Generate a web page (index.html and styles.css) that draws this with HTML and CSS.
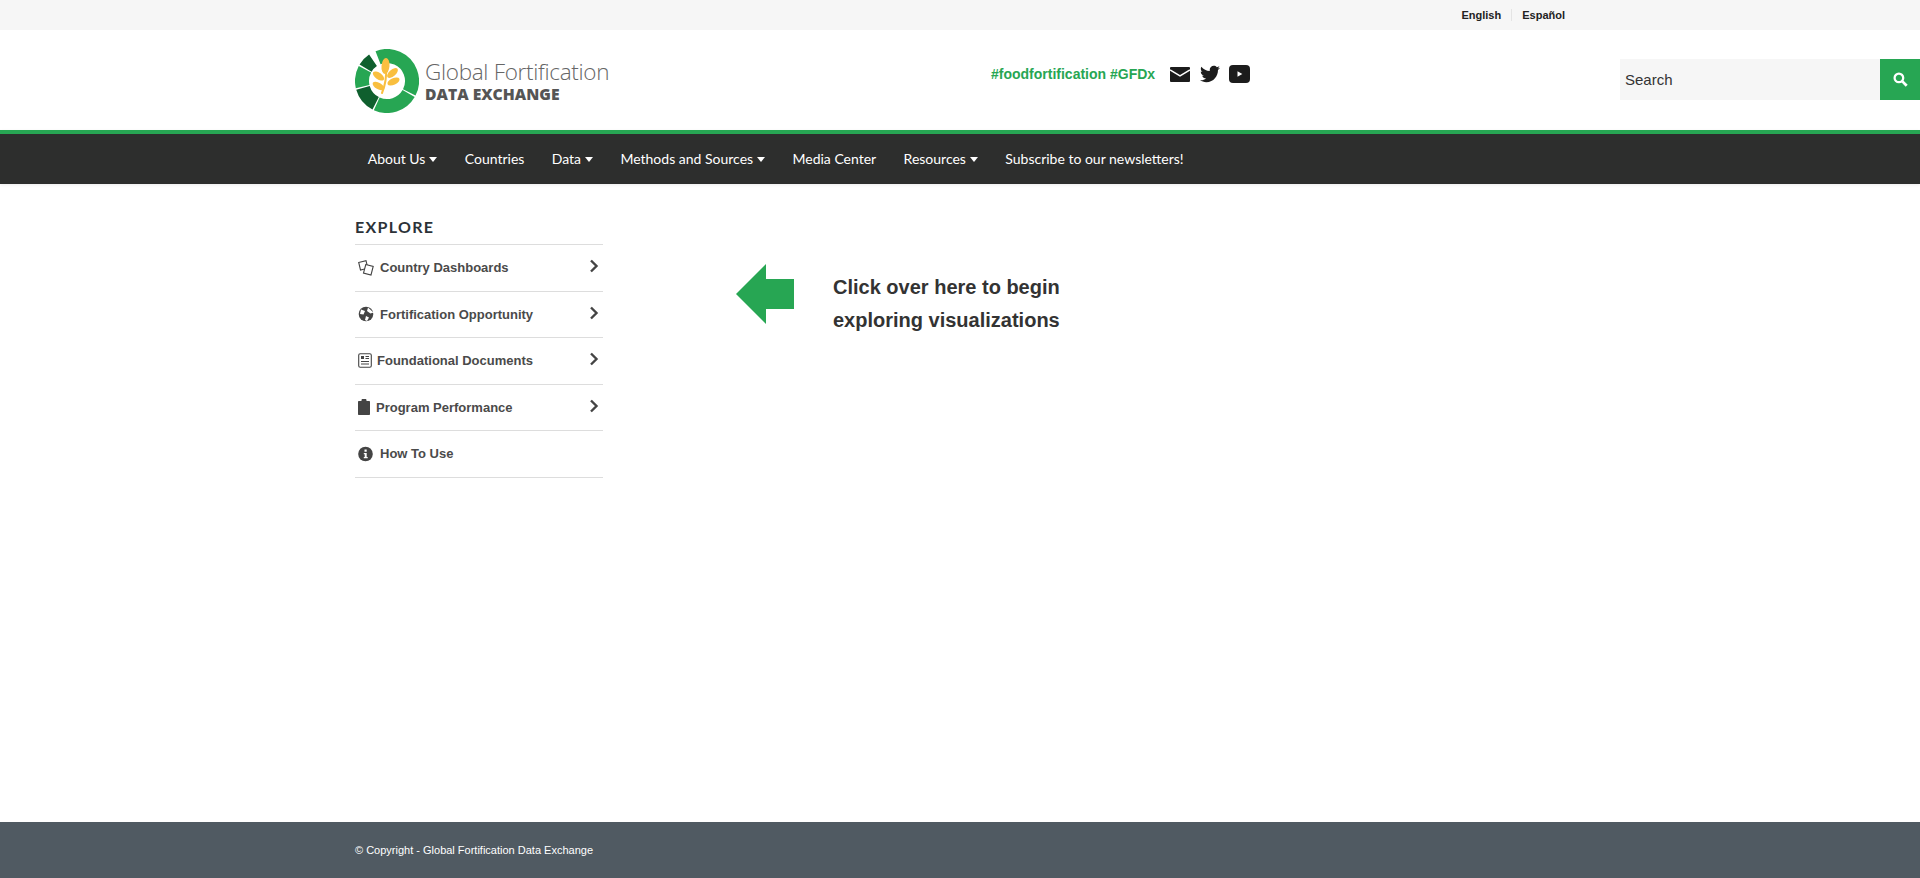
FILE: index.html
```html
<!DOCTYPE html>
<html lang="en">
<head>
<meta charset="utf-8">
<title>Global Fortification Data Exchange</title>
<link rel="stylesheet" href="styles.css">
</head>
<body>
<div class="topbar">
  <div class="langs"><a class="lang">English</a><span class="lang-sep"></span><a class="lang">Español</a></div>
</div>
<header class="header">
  <a class="logo">
    <svg class="logo-mark" viewBox="0 0 64 64" width="64" height="64">
      <circle class="seg seg-g" cx="32" cy="32" r="25" pathLength="360" stroke-dasharray="138 360" transform="rotate(-111 32 32)"/>
      <circle class="seg seg-g" cx="32" cy="32" r="25" pathLength="360" stroke-dasharray="84 360" transform="rotate(30 32 32)"/>
      <circle class="seg seg-d" cx="32" cy="32" r="25" pathLength="360" stroke-dasharray="47 360" transform="rotate(117 32 32)"/>
      <circle class="seg seg-g" cx="32" cy="32" r="25" pathLength="360" stroke-dasharray="41 360" transform="rotate(167 32 32)"/>
      <circle class="seg seg-d" cx="32" cy="32" r="25" pathLength="360" stroke-dasharray="25 360" transform="rotate(211 32 32)"/>
      <g class="wheat">
        <ellipse cx="30.500" cy="17" rx="4" ry="8" transform="rotate(5 30.500 17)"/>
        <ellipse cx="37.500" cy="24" rx="3.300" ry="6.500" transform="rotate(50 37.500 24)"/>
        <ellipse cx="38.500" cy="32.500" rx="3.300" ry="6.500" transform="rotate(65 38.500 32.500)"/>
        <ellipse cx="23.500" cy="27" rx="3.300" ry="6.500" transform="rotate(-55 23.500 27)"/>
        <ellipse cx="23.500" cy="37" rx="3.300" ry="6.500" transform="rotate(-60 23.500 37)"/>
        <path class="stem" d="M31 18 Q32 32 27 44"/>
      </g>
    </svg>
    <span class="logo-text"><span class="logo-top">Global Fortification</span><span class="logo-bottom">DATA EXCHANGE</span></span>
  </a>
  <div class="social">
    <span class="tag">#foodfortification #GFDx</span>
    <svg class="ico-mail" viewBox="0 0 20 15" width="20" height="15"><rect width="20" height="15" rx="1"/><path class="mail-flap" d="M0 3 10 9l10-6"/></svg>
    <svg class="ico-tw" viewBox="0 0 24 24" width="20" height="20"><path d="M23.954 4.569c-.885.389-1.83.654-2.825.775 1.014-.611 1.794-1.574 2.163-2.723-.951.555-2.005.959-3.127 1.184-.896-.959-2.173-1.559-3.591-1.559-2.717 0-4.92 2.203-4.92 4.917 0 .39.045.765.127 1.124C7.691 8.094 4.066 6.13 1.64 3.161c-.427.722-.666 1.561-.666 2.475 0 1.71.87 3.213 2.188 4.096-.807-.026-1.566-.248-2.228-.616v.061c0 2.385 1.693 4.374 3.946 4.827-.413.111-.849.171-1.296.171-.314 0-.615-.03-.916-.086.631 1.953 2.445 3.377 4.604 3.417-1.68 1.319-3.809 2.105-6.102 2.105-.39 0-.779-.023-1.17-.067 2.189 1.394 4.768 2.209 7.557 2.209 9.054 0 13.999-7.496 13.999-13.986 0-.209 0-.42-.015-.63.961-.689 1.8-1.56 2.46-2.548l-.047-.02z"/></svg>
    <svg class="ico-yt" viewBox="0 0 21 18" width="21" height="18"><rect width="21" height="18" rx="4"/><path class="yt-play" d="M8.500 6.200v5.600l4.800-2.800z"/></svg>
  </div>
  <form class="search">
    <input class="search-input" type="text" placeholder="Search">
    <button class="search-btn" type="button" aria-label="Search">
      <svg viewBox="0 0 16 16" width="15" height="15"><circle class="lens" cx="6.300" cy="6.300" r="4.600"/><path class="handle" d="M10 10l4.600 4.600"/></svg>
    </button>
  </form>
</header>
<nav class="nav">
  <a class="nav-item">About Us<i class="caret"></i></a>
  <a class="nav-item">Countries</a>
  <a class="nav-item">Data<i class="caret"></i></a>
  <a class="nav-item">Methods and Sources<i class="caret"></i></a>
  <a class="nav-item">Media Center</a>
  <a class="nav-item">Resources<i class="caret"></i></a>
  <a class="nav-item">Subscribe to our newsletters!</a>
</nav>
<main class="main">
  <aside class="sidebar">
    <h2 class="side-title">EXPLORE</h2>
    <ul class="side-list">
      <li class="side-row">
        <svg class="side-ico w16" viewBox="0 0 16 16" width="16" height="16"><path class="line" d="M.7 2.500 8 .7l1.800 7.500-7.300 1.800z"/><path class="line front" d="M7.800 4.500 15.200 6.500 13 15 5.500 13z"/></svg>
        <span class="side-label">Country Dashboards</span>
        <svg class="chev" viewBox="0 0 10 14" width="10" height="14"><path d="M2 1.500 7.500 7 2 12.500"/></svg>
      </li>
      <li class="side-row">
        <svg class="side-ico w16" viewBox="0 0 16 16" width="16" height="16"><circle class="solid" cx="8" cy="8" r="7.300"/><path class="cut" d="M3 3.500 7 5 5.500 8.500 2 8M10 1.500 9 5l3.500 2.500 3-1M8 10l3 1.500L9 15l-2-1z"/></svg>
        <span class="side-label">Fortification Opportunity</span>
        <svg class="chev" viewBox="0 0 10 14" width="10" height="14"><path d="M2 1.500 7.500 7 2 12.500"/></svg>
      </li>
      <li class="side-row">
        <svg class="side-ico w14" viewBox="0 0 14 15" width="14" height="15"><rect class="line" x=".7" y=".7" width="12.600" height="13.600" rx="1.500"/><path class="solid" d="M3 3h3v3H3zM3 8h8v1H3zM3 10.500h8v1H3zM7.500 3H11v1H7.500zM7.500 5H11v1H7.500z"/></svg>
        <span class="side-label">Foundational Documents</span>
        <svg class="chev" viewBox="0 0 10 14" width="10" height="14"><path d="M2 1.500 7.500 7 2 12.500"/></svg>
      </li>
      <li class="side-row">
        <svg class="side-ico w12" viewBox="0 0 12 16" width="12" height="16"><path class="solid" d="M1 2h2.500V1.200C3.500.6 4 0 4.600 0h2.800c.6 0 1.100.6 1.100 1.200V2H11c.6 0 1 .4 1 1v12c0 .6-.4 1-1 1H1c-.6 0-1-.4-1-1V3c0-.6.4-1 1-1z"/></svg>
        <span class="side-label">Program Performance</span>
        <svg class="chev" viewBox="0 0 10 14" width="10" height="14"><path d="M2 1.500 7.500 7 2 12.500"/></svg>
      </li>
      <li class="side-row">
        <svg class="side-ico w16" viewBox="0 0 16 16" width="16" height="16"><circle class="solid" cx="7.500" cy="8" r="7.300"/><path class="info" d="M6.500 3.500h2.200v2.200H6.500zM5.800 7h2.900v4h1v1.300H5.800V11h.9V8.300h-.9z"/></svg>
        <span class="side-label">How To Use</span>
      </li>
    </ul>
  </aside>
  <section class="callout">
    <svg class="arrow" viewBox="0 0 58 60" width="58" height="60"><path d="M0 30 30 0v15h28v30H30v15z"/></svg>
    <p class="callout-text">Click over here to begin<br>exploring visualizations</p>
  </section>
</main>
<footer class="footer">© Copyright - Global Fortification Data Exchange</footer>
</body>
</html>
```
FILE: styles.css
```css
* { box-sizing: border-box; }
html, body { margin: 0; height: 100%; }
body {
  display: flex;
  flex-direction: column;
  min-height: 878px;
  background: #fff;
  color: #333;
  font-family: "Liberation Sans", Arial, sans-serif;
  overflow: hidden;
}
.topbar {
  height: 30px;
  background: #f6f6f6;
  padding-left: 355px;
  width: 100%;
  display: flex;
}
.langs {
  width: 1210px;
  display: flex;
  justify-content: flex-end;
  align-items: center;
}
.lang {
  font-size: 11px;
  font-weight: 700;
  color: #222;
}
.lang-sep {
  width: 1px;
  height: 12px;
  background: #e4e4e4;
  margin: 0 10px;
}
.header {
  height: 100px;
  background: #fff;
  padding-left: 355px;
  display: flex;
  align-items: flex-start;
}
.logo {
  display: flex;
  width: 636px;
  padding-top: 19px;
}
.logo-mark { flex: none; }
.seg { fill: none; stroke-width: 14; }
.seg-g { stroke: #27a653; }
.seg-d { stroke: #0f5f2e; }
.wheat ellipse { fill: #f9bf3f; }
.stem { fill: none; stroke: #f9bf3f; stroke-width: 2; stroke-linecap: round; }
.logo-text {
  display: flex;
  flex-direction: column;
  margin-left: 6px;
  padding-top: 10px;
  color: #666;
}
.logo-top {
  font-family: "Open Sans", sans-serif;
  font-weight: 300;
  font-size: 22.500px;
  line-height: 26px;
  white-space: nowrap;
  letter-spacing: -.3px;
}
.logo-bottom {
  font-family: "Open Sans", sans-serif;
  font-weight: 800;
  font-size: 15.700px;
  line-height: 19px;
  color: #555;
  white-space: nowrap;
}
.social {
  display: flex;
  align-items: center;
  height: 20px;
  margin-top: 34px;
  width: 629px;
}
.tag {
  font-size: 14px;
  font-weight: 700;
  color: #27a653;
  white-space: nowrap;
}
.ico-mail, .ico-tw, .ico-yt { fill: #1c1c1c; flex: none; }
.ico-mail { margin-left: 15px; }
.ico-tw { margin-left: 10px; }
.ico-yt { margin-left: 9px; }
.mail-flap { fill: none; stroke: #fff; stroke-width: 1.500; }
.yt-play { fill: #fff; }
.search {
  display: flex;
  flex: none;
  width: 300px;
  height: 41px;
  margin-top: 29px;
}
.search-input {
  width: 260px;
  height: 41px;
  border: 0;
  outline: 0;
  background: #f6f6f6;
  padding: 0 5px;
  font: 15px "Liberation Sans", Arial, sans-serif;
  color: #333;
}
.search-input::placeholder { color: #333; opacity: 1; }
.search-btn {
  width: 40px;
  height: 41px;
  border: 0;
  padding: 0;
  background: #27a653;
  display: flex;
  align-items: center;
  justify-content: center;
}
.lens { fill: none; stroke: #fff; stroke-width: 2.400; }
.handle { fill: none; stroke: #fff; stroke-width: 3; }
.nav {
  height: 54px;
  background: #2d2e2d;
  border-top: 4px solid #27a653;
  padding-left: 354px;
  padding-bottom: 1px;
  display: flex;
  align-items: center;
  box-shadow: 0 1px 3px rgba(0,0,0,.08);
}
.nav-item {
  font-family: Lato, sans-serif;
  font-size: 14px;
  color: #fff;
  padding: 0 13.700px;
  white-space: nowrap;
  display: flex;
  align-items: center;
}
.caret {
  width: 0;
  height: 0;
  margin-left: 4px;
  margin-top: 2px;
  border-left: 4px solid transparent;
  border-right: 4px solid transparent;
  border-top: 5px solid #fff;
}
.main {
  flex: 1;
  display: flex;
  padding-left: 355px;
}
.sidebar { width: 248px; flex: none; padding-top: 29px; }
.side-title {
  margin: 0 0 4px;
  font-family: Lato, sans-serif;
  font-weight: 700;
  font-size: 16px;
  line-height: 27px;
  letter-spacing: 1.300px;
  color: #2c3238;
}
.side-list {
  list-style: none;
  margin: 0;
  padding: 0;
  border-top: 1px solid #ddd;
}
.side-row {
  height: 46.500px;
  border-bottom: 1px solid #ddd;
  display: flex;
  align-items: center;
  padding-left: 3px;
}
.side-ico { flex: none; margin-right: 6px; }
.w16 { width: 16px; }
.w14 { width: 14px; margin-right: 5px; }
.w12 { width: 12px; margin-right: 6px; }
.line { fill: none; stroke: #444; stroke-width: 1.100; }
.front { fill: #fff; }
.solid { fill: #444; }
.cut { fill: #fff; }
.info { fill: #fff; }
.side-label {
  font-size: 13px;
  font-weight: 700;
  color: #4a4a4a;
  flex: 1;
  white-space: nowrap;
}
.chev {
  flex: none;
  margin-right: 4px;
  margin-bottom: 3px;
  fill: none;
  stroke: #444;
  stroke-width: 2.400;
}
.callout {
  display: flex;
  align-items: flex-start;
  margin-left: 133px;
  padding-top: 80px;
}
.arrow { fill: #27a653; flex: none; }
.callout-text {
  margin: 7px 0 0 39px;
  font-size: 20px;
  font-weight: 700;
  line-height: 33px;
  color: #333;
  white-space: nowrap;
}
.footer {
  height: 56px;
  flex: none;
  background: #505a62;
  color: #fff;
  font-size: 11px;
  padding-left: 355px;
  display: flex;
  align-items: center;
}
```
